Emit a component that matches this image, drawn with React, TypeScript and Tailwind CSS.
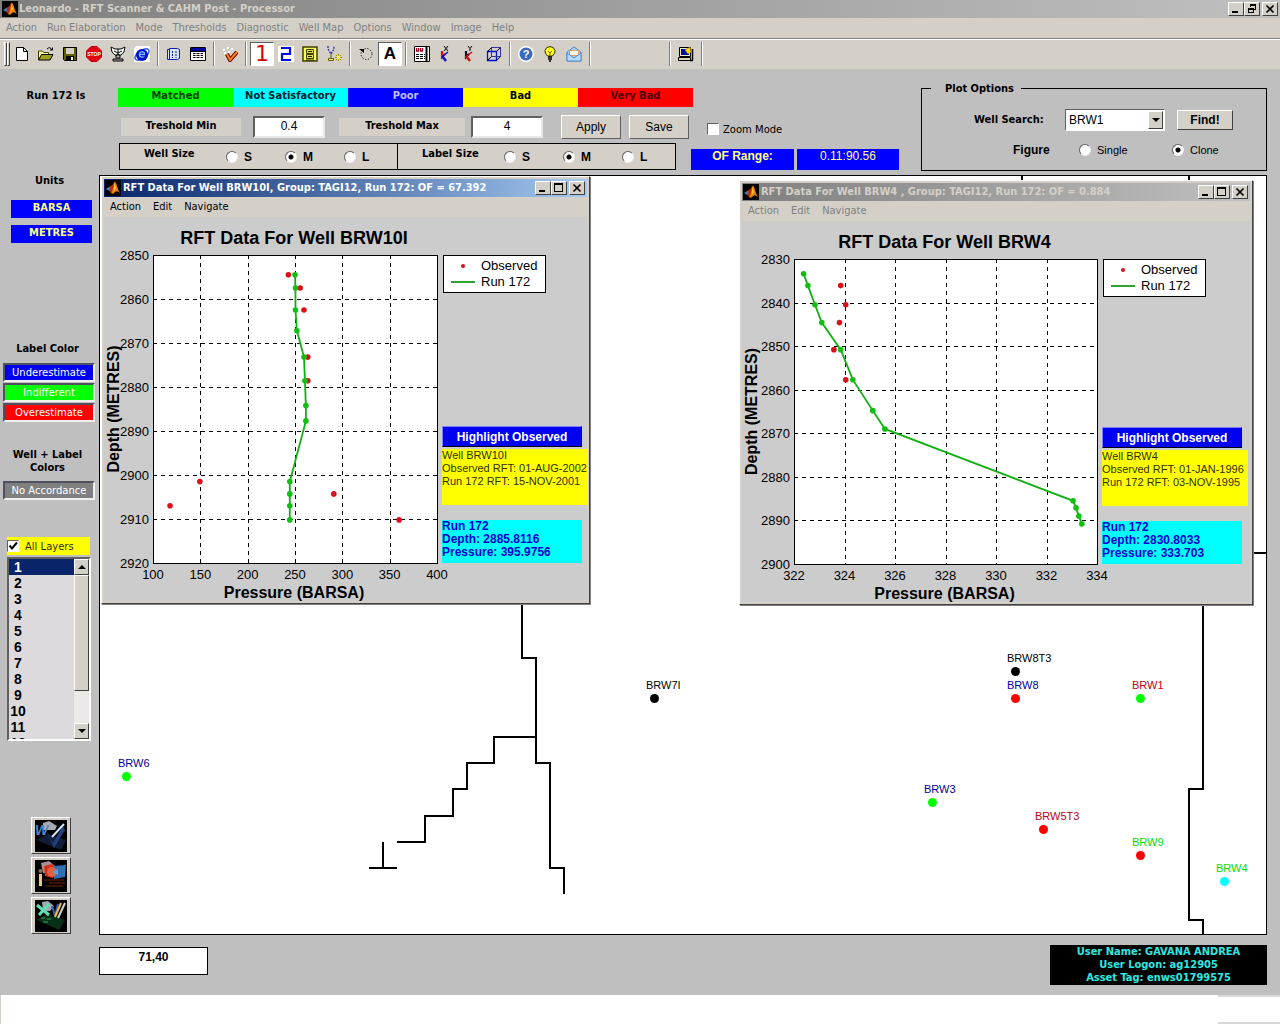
import { ReactNode, useState } from "react";

const tahoma = "font-['DejaVu_Sans_Condensed','Noto_Sans',sans-serif]";
const arial = "font-['Liberation_Sans',Arial,sans-serif]";
const verdana = "font-['DejaVu_Sans',sans-serif]";

const raised = "border border-t-white border-l-white border-r-[#404040] border-b-[#404040]";
const sunken = "border border-t-[#606060] border-l-[#606060] border-r-white border-b-white";

type Point = [number, number];

type ChartData = {
  well: string;
  xTicks: number[];
  yTicks: number[];
  left: number;
  plotWidth: number;
  plotHeight: number;
  observed: Point[];
  run: Point[];
};

const chartBRW10I: ChartData = {
  well: "BRW10I",
  xTicks: [100, 150, 200, 250, 300, 350, 400],
  yTicks: [2850, 2860, 2870, 2880, 2890, 2900, 2910, 2920],
  left: 49,
  plotWidth: 284,
  plotHeight: 308,
  observed: [
    [243, 2854.5],
    [255.5, 2857.5],
    [259.5, 2862.5],
    [263.5, 2873.2],
    [263.5, 2878.6],
    [149.5, 2901.5],
    [118, 2907],
    [291, 2904.3],
    [360, 2910.2],
  ],
  run: [
    [250, 2854.5],
    [250.5, 2857.5],
    [250.5, 2862.5],
    [252, 2867.2],
    [259.5, 2873.2],
    [260.5, 2878.6],
    [261.5, 2884.2],
    [261.5, 2887.7],
    [244.5, 2901.5],
    [244.5, 2904.3],
    [244.5, 2907],
    [244.5, 2910.2],
  ],
};

const chartBRW4: ChartData = {
  well: "BRW4",
  xTicks: [322, 324, 326, 328, 330, 332, 334],
  yTicks: [2830, 2840, 2850, 2860, 2870, 2880, 2890, 2900],
  left: 52,
  plotWidth: 303,
  plotHeight: 305,
  observed: [
    [323.85, 2836.1],
    [324.05, 2840.5],
    [323.8, 2844.6],
    [323.58, 2850.8],
    [324.05, 2857.7],
  ],
  run: [
    [322.38, 2833.4],
    [322.55, 2836.1],
    [322.83, 2840.5],
    [323.1, 2844.6],
    [323.85, 2850.8],
    [324.33, 2857.7],
    [325.12, 2864.8],
    [325.6, 2869],
    [333.05, 2885.5],
    [333.17, 2887.1],
    [333.28, 2889],
    [333.4, 2890.8],
  ],
};

const wells = [
  { name: "BRW7I", x: 554, y: 522, dot: "bg-black", label: "text-black" },
  { name: "BRW8T3", x: 915, y: 495, dot: "bg-black", label: "text-black" },
  { name: "BRW8", x: 915, y: 522, dot: "bg-[#ff0000]", label: "text-[#0000a0]" },
  { name: "BRW1", x: 1040, y: 522, dot: "bg-[#00ff00]", label: "text-[#c00010]" },
  { name: "BRW6", x: 26, y: 600, dot: "bg-[#00ff00]", label: "text-[#0000a0]" },
  { name: "BRW3", x: 832, y: 626, dot: "bg-[#00ff00]", label: "text-[#0000a0]" },
  { name: "BRW5T3", x: 943, y: 653, dot: "bg-[#ff0000]", label: "text-[#c00010]" },
  { name: "BRW9", x: 1040, y: 679, dot: "bg-[#ff0000]", label: "text-[#00e000]" },
  { name: "BRW4", x: 1124, y: 705, dot: "bg-[#00ffff]", label: "text-[#00e000]" },
];

const ratings = [
  { label: "Matched", style: "bg-[#00ff00] text-[#004000]" },
  { label: "Not Satisfactory", style: "bg-[#00ffff] text-[#002030]" },
  { label: "Poor", style: "bg-[#0000ff] text-[#c0c0ff]" },
  { label: "Bad", style: "bg-[#ffff00] text-black" },
  { label: "Very Bad", style: "bg-[#ff0000] text-[#500000]" },
];

const labelColors = [
  { label: "Underestimate", style: "bg-[#0000f0]" },
  { label: "Indifferent", style: "bg-[#00ff00]" },
  { label: "Overestimate", style: "bg-[#ff0000]" },
];

const mainMenu = [
  "Action",
  "Run Elaboration",
  "Mode",
  "Thresholds",
  "Diagnostic",
  "Well Map",
  "Options",
  "Window",
  "Image",
  "Help",
];

function MatlabLogo() {
  return (
    <svg viewBox="0 0 16 16" className="h-4 w-4 shrink-0" aria-hidden="true">
      <rect width="16" height="16" fill="#000" />
      <path d="M1 9 L5 6.5 L7 8 L4.5 11 Z" fill="#3f7fd0" />
      <path d="M5 6.5 Q8 5 9.5 1.5 L8.5 8 L6 13 L4.5 11 Z" fill="#b03010" />
      <path d="M9.5 1.5 Q11 2 12 6 Q13 10 15 13 Q12 10 10 12 Q8 15 6 13 Q8 10 9.5 1.5Z" fill="#f08010" />
      <path d="M9.5 2.5 L10.8 8 L9 11 Z" fill="#ffd040" />
    </svg>
  );
}

function CaptionButtons({ restore = false }: { restore?: boolean }) {
  const base = `flex h-[14px] w-4 items-center justify-center bg-[#d4d0c8] ${raised}`;
  return (
    <div className="flex shrink-0 items-center">
      <button aria-label="Minimize" className={base}>
        <svg viewBox="0 0 12 10" className="h-[10px] w-3" shapeRendering="crispEdges">
          <path d="M2 7h6v2H2z" />
        </svg>
      </button>
      <button aria-label={restore ? "Restore" : "Maximize"} className={base}>
        <svg viewBox="0 0 12 10" className="h-[10px] w-3" shapeRendering="crispEdges">
          {restore ? (
            <path d="M4 0h6v6H8V5h1V2H5v1H4zM2 4h6v5H2zM3 6v2h4V6z" fillRule="evenodd" />
          ) : (
            <path d="M1 0h9v9H1zM2 2v6h7V2z" fillRule="evenodd" />
          )}
        </svg>
      </button>
      <button aria-label="Close" className={`${base} ml-[2px]`}>
        <svg viewBox="0 0 12 10" className="h-[10px] w-3">
          <path d="M2.5 1.5l7 7M9.5 1.5l-7 7" stroke="#000" strokeWidth="1.7" />
        </svg>
      </button>
    </div>
  );
}

function Icon({ children }: { children: ReactNode }) {
  return (
    <svg viewBox="0 0 16 16" className="h-4 w-4" fill="none" aria-hidden="true">
      {children}
    </svg>
  );
}

function Tool({ name, active = false, children }: { name: string; active?: boolean; children: ReactNode }) {
  return (
    <button
      aria-label={name}
      className={`flex h-6 w-6 items-center justify-center ${active ? `bg-white ${sunken}` : ""}`}
    >
      {children}
    </button>
  );
}

function Separator() {
  return (
    <div className="flex w-2 justify-center">
      <div className="h-6 w-[2px] border-l border-r border-l-[#808080] border-r-white" />
    </div>
  );
}

function AxesIcon({ letter, first, second }: { letter: string; first: string; second: string }) {
  return (
    <Icon>
      {letter === "X" ? (
        <path d="M6 0l4 5M10 0l-4 5" stroke="#000" />
      ) : (
        <path d="M6 0l2 2.5L10 0M8 2.5V5" stroke="#000" />
      )}
      <path d="M4 5v6l3-3" stroke={first} strokeWidth="2.2" />
      <path d="M4 10l4 5" stroke={second} strokeWidth="2.6" />
      <path d="M5 10l5-4" stroke={second} strokeWidth="1.6" />
    </Icon>
  );
}

function Toolbar() {
  return (
    <div className="flex h-[31px] items-center border-t border-[#808080] bg-[#d4d0c8] pl-1 shadow-[inset_0_1px_0_#fff]">
      <div className={`h-6 w-[3px] ${raised}`} />
      <div className={`h-6 w-[3px] ${raised}`} />
      <Tool name="New">
        <Icon>
          <path d="M2.5 1.5h7l4 4v9h-11z" fill="#fff" stroke="#000" />
          <path d="M9.5 1.5v4h4" stroke="#000" />
        </Icon>
      </Tool>
      <Tool name="Open">
        <Icon>
          <path d="M.5 14V5h4l1 1.500h5V9" fill="#ffffa0" stroke="#404000" />
          <path d="M.5 14l3-5.500H15L12 14z" fill="#a0a020" stroke="#000" />
          <path d="M9 3q3-3 5 1M14.500 1.500V4H12" stroke="#000" />
        </Icon>
      </Tool>
      <Tool name="Save">
        <Icon>
          <path d="M1.500 1.500h13v13h-12l-1-1z" fill="#606000" stroke="#000" />
          <path d="M4 2h8v6H4z" fill="#d4d0c8" />
          <path d="M4 10h8v4.500H4z" fill="#000" />
          <path d="M9 11h2v3H9z" fill="#fff" />
        </Icon>
      </Tool>
      <Tool name="Stop">
        <svg viewBox="0 0 16 16" className="h-4 w-4">
          <path d="M5 .5h6L15.500 5v6L11 15.500H5L.5 11V5z" fill="#e00010" stroke="#c00010" />
          <text x="8" y="10" textAnchor="middle" fontSize="5" fontWeight="700" fill="#fff" fontFamily="Liberation Sans">
            STOP
          </text>
        </svg>
      </Tool>
      <Tool name="Connect">
        <Icon>
          <path d="M1 1l4 2h6l4-2-1 5-3 3H5L2 6z" fill="#fff" stroke="#000" />
          <path d="M4 5l4 2 4-2M8 3v6" stroke="#000" />
          <path d="M6 9h4v3H6zM3 13h10v2H3z" fill="#b0b0b0" stroke="#000" />
        </Icon>
      </Tool>
      <Tool name="Browser">
        <Icon>
          <path d="M2 0h14v16H0V3z" fill="#fff" />
          <ellipse cx="8" cy="8.500" rx="8" ry="4" stroke="#3060e0" strokeWidth="1.500" transform="rotate(-35 8 8.500)" />
          <circle cx="8" cy="9" r="6" fill="#0010d0" />
          <circle cx="8" cy="8.500" r="2.600" stroke="#80c0ff" strokeWidth="1.200" />
          <path d="M5 8.500h6" stroke="#80c0ff" strokeWidth="1.200" />
          <path d="M9 9.200h4v1.300H9z" fill="#0010d0" />
        </Icon>
      </Tool>
      <Separator />
      <Tool name="Columns">
        <Icon>
          <path d="M1.500 3.500h2v10h-2zM3.500 2.500h8l2 1v9l-2 1h-8z" fill="#d8e4ff" stroke="#1020b0" />
          <path d="M6.500 5v7M10 5v7" stroke="#1020b0" strokeDasharray="2 1" />
        </Icon>
      </Tool>
      <Tool name="Table">
        <Icon>
          <path d="M.5 1.500h15v13H.5z" fill="#fff" stroke="#000" />
          <path d="M1 2h14v3H1z" fill="#0000a0" />
          <path d="M1 5.500h14M3 7.500h10M3 9.500h10M3 11.500h10" stroke="#000" />
          <path d="M6 6v8M10 6v8" stroke="#fff" />
        </Icon>
      </Tool>
      <Separator />
      <Tool name="Check">
        <Icon>
          <path d="M1 4h2M5 2h2M9 3h2M2 7h2M6 6h2" stroke="#fff" strokeWidth="2" />
          <path d="M5 8l3 6 7-8" stroke="#600" strokeWidth="4" />
          <path d="M5 8l3 6 7-8" stroke="#ff8010" strokeWidth="2" />
        </Icon>
      </Tool>
      <Separator />
      <Tool name="Layout one" active>
        <span className="font-['DejaVu_Sans',sans-serif] text-[22px] leading-5 text-[#e00000]">1</span>
      </Tool>
      <Tool name="Layout two">
        <Icon>
          <path d="M0 0h16v16H0z" fill="#fff" />
          <path d="M3 2h9v6H4v6h9" stroke="#0010e0" strokeWidth="2.200" />
        </Icon>
      </Tool>
      <Tool name="Archive">
        <Icon>
          <path d="M1 1h14v14H1z" fill="#ffff60" stroke="#404000" strokeWidth="1.500" />
          <path d="M4.500 3.500h7v4h-7zM4.500 8.500h7v4h-7z" fill="#e0e040" stroke="#404000" />
          <path d="M6 5.500h4M6 10.500h4M4 14h8" stroke="#202000" />
        </Icon>
      </Tool>
      <Tool name="Curve">
        <Icon>
          <path d="M2 0v3l3 5 3-5V0" stroke="#3030a0" strokeWidth="1.300" strokeDasharray="2 1" />
          <path d="M5 8v4M2.500 12.500h5v2h-5z" stroke="#606000" fill="#ffff40" />
          <path d="M9 11.500h7M12.500 8v7M10 9l5 5M15 9l-5 5" stroke="#909000" />
          <circle cx="12.500" cy="11.500" r="1.800" fill="#ffff60" />
        </Icon>
      </Tool>
      <Separator />
      <Tool name="Rotate">
        <Icon>
          <circle cx="8.500" cy="8" r="5.500" stroke="#000" strokeDasharray="1.200 1.700" />
          <path d="M1 3h5v4z" fill="#000" />
        </Icon>
      </Tool>
      <Tool name="Labels" active>
        <span className={`${arial} text-[17px] font-bold leading-5 text-black`}>A</span>
      </Tool>
      <Separator />
      <Tool name="Report">
        <Icon>
          <path d="M.5 .5h15v15H.5z" fill="#fff" stroke="#000" />
          <path d="M12.500 0v16" stroke="#000" strokeWidth="2" />
          <path d="M2.500 2v3h2V2M6.500 2v3h2V2" stroke="#a00020" strokeWidth="1.300" />
          <path d="M2 8.500h9M2 10.500h9M2 12.500h9" stroke="#000" strokeDasharray="3 1" />
        </Icon>
      </Tool>
      <Tool name="X axis">
        <AxesIcon letter="X" first="#e01010" second="#1010c0" />
      </Tool>
      <Tool name="Y axis">
        <AxesIcon letter="Y" first="#101030" second="#d01010" />
      </Tool>
      <Tool name="Box">
        <Icon>
          <path d="M1.500 5.500h9v9h-9z" stroke="#0010d0" strokeWidth="1.300" />
          <path d="M5.500 1.500h9v9h-9z" stroke="#3030a0" />
          <path d="M1.500 5.500l4-4M10.500 5.500l4-4M10.500 14.500l4-4M1.500 14.500l4-4" stroke="#000" />
        </Icon>
      </Tool>
      <Separator />
      <Tool name="Help">
        <svg viewBox="0 0 16 16" className="h-4 w-4">
          <circle cx="8" cy="8" r="8" fill="#fff" />
          <circle cx="8" cy="8" r="6.500" fill="#3868c0" />
          <text x="8" y="12" textAnchor="middle" fontSize="11" fontWeight="700" fill="#fff" fontFamily="Liberation Sans">
            ?
          </text>
        </svg>
      </Tool>
      <Tool name="Tips">
        <Icon>
          <path d="M5.500 10Q2.500 7 3 4.500 4 .6 8 .6t5 3.900Q13.500 7 10.500 10z" fill="#ffff20" stroke="#303000" />
          <path d="M6 5l2 2 2-2M8 7v3" stroke="#806000" />
          <path d="M6 11h4M6 13h4M7 15h2" stroke="#000" strokeWidth="1.500" />
        </Icon>
      </Tool>
      <Tool name="Mail">
        <Icon>
          <path d="M1 6l7-5 7 5v9H1z" fill="#a8d0f8" stroke="#5088c8" />
          <path d="M3.500 4.500h9v5h-9z" fill="#fff8e8" stroke="#e0a060" />
          <path d="M1 7l7 5 7-5v8H1z" fill="#b8dcff" stroke="#5088c8" />
        </Icon>
      </Tool>
      <Separator />
      <div className="w-[72px]" />
      <Separator />
      <Tool name="Workstation">
        <Icon>
          <path d="M1.500 1.500h11v9h-11z" fill="#f0ecc0" stroke="#000" />
          <path d="M3 3h8v6H3z" fill="#0010a0" />
          <path d="M7 4l5-3 1 5-3 2z" fill="#ffe000" stroke="#806000" strokeWidth=".5" />
          <path d="M.5 11.500h12v3H.5z" fill="#d8d4b0" stroke="#000" />
          <path d="M14.500 3v11M12 14.500h3" stroke="#000" strokeWidth="1.500" />
        </Icon>
      </Tool>
      <Separator />
    </div>
  );
}

const radioStyle =
  "h-3 w-3 shrink-0 appearance-none rounded-full border border-t-[#606060] border-l-[#606060] border-r-[#eeeeee] border-b-[#eeeeee] bg-white checked:bg-[radial-gradient(circle,#000_0_2px,#fff_3px)]";

function SizeGroup({ title, name }: { title: string; name: string }) {
  const [size, setSize] = useState("M");
  return (
    <div role="radiogroup" aria-label={title} className="flex flex-1 items-center pl-6">
      <span className="w-[82px] pb-1 text-[11px] font-bold">{title}</span>
      {["S", "M", "L"].map((s) => (
        <label
          key={s}
          className={`${arial} flex w-[59px] items-center gap-[6px] text-[12px] font-bold last:w-auto`}
        >
          <input
            type="radio"
            name={name}
            checked={size === s}
            onChange={() => setSize(s)}
            className={radioStyle}
          />
          {s}
        </label>
      ))}
    </div>
  );
}

function Controls() {
  const inputStyle = `${arial} h-[22px] bg-white pb-[2px] text-center text-[12px] border-2 border-t-[#606060] border-l-[#606060] border-r-[#e8e8e8] border-b-[#e8e8e8]`;
  const buttonStyle = `${arial} h-6 w-[60px] bg-[#d4d0c8] text-[12px] border border-t-white border-l-white border-r-[#606060] border-b-[#606060]`;
  return (
    <div className="flex h-[106px] justify-between pt-[19px]">
      <div className="pl-[19px]">
        <div className="flex">
          {ratings.map((r) => (
            <div key={r.label} className={`h-[19px] w-[115px] text-center text-[11px] font-bold leading-4 ${r.style}`}>
              {r.label}
            </div>
          ))}
        </div>
        <div className="mt-2 flex items-center pl-[3px]">
          <label htmlFor="min" className="h-[18px] w-[120px] bg-[#d4d0c8] text-center text-[11px] font-bold leading-4">
            Treshold Min
          </label>
          <input id="min" defaultValue="0.4" className={`${inputStyle} ml-3 w-[72px]`} />
          <label htmlFor="max" className="ml-[14px] h-[18px] w-[126px] bg-[#d4d0c8] text-center text-[11px] font-bold leading-4">
            Treshold Max
          </label>
          <input id="max" defaultValue="4" className={`${inputStyle} ml-[6px] w-[72px]`} />
          <button className={`${buttonStyle} ml-[18px]`}>Apply</button>
          <button className={`${buttonStyle} ml-2`}>Save</button>
          <label className={`${verdana} ml-[18px] flex items-center gap-1 pt-1 text-[10px]`}>
            <input type="checkbox" className={`h-3 w-3 appearance-none bg-white ${sunken}`} />
            Zoom Mode
          </label>
        </div>
        <div className="mt-1 flex items-end">
          <div className="ml-[1px] flex h-[27px] w-[557px] divide-x divide-black border border-black bg-[#d4d0c8]">
            <SizeGroup title="Well Size" name="well-size" />
            <SizeGroup title="Label Size" name="label-size" />
          </div>
          <div className={`${arial} ml-[15px] flex gap-[3px] text-center text-[12px] leading-[14px] text-[#ffff80]`}>
            <div className="h-[21px] w-[103px] bg-[#0000ff] font-bold">OF Range:</div>
            <div className="h-[21px] w-[102px] bg-[#0000ff]">0.11:90.56</div>
          </div>
        </div>
      </div>

      <section className="flex h-[83px] w-[346px] shrink-0 flex-col border border-black">
        <h2 className="-mt-2 ml-[9px] w-[90px] bg-[#bfbfbf] pl-[14px] text-[11px] font-bold leading-4">Plot Options</h2>
        <div className="mt-3 flex items-center">
          <label htmlFor="search" className="ml-[52px] w-[91px] text-[11px] font-bold">
            Well Search:
          </label>
          <div className={`relative h-[22px] w-[100px] bg-white ${sunken}`}>
            <select id="search" className={`${arial} block h-5 w-full appearance-none pl-[3px] text-[12px] leading-5`}>
              <option>BRW1</option>
              <option>BRW4</option>
              <option>BRW10I</option>
            </select>
            <span className={`pointer-events-none absolute inset-y-[1px] right-[1px] flex w-[15px] items-center justify-center bg-[#d4d0c8] ${raised}`}>
              <svg viewBox="0 0 8 4" className="h-1 w-2">
                <path d="M0 0h8L4 4z" />
              </svg>
            </span>
          </div>
          <button className={`${arial} ml-3 h-5 w-14 bg-[#d4d0c8] text-[12px] font-bold ${raised}`}>Find!</button>
        </div>
        <div className={`${arial} mt-[10px] flex items-center text-[11px]`}>
          <span className="ml-[91px] w-[66px] text-[12px] font-bold">Figure</span>
          <label className="flex w-[93px] items-center gap-[6px]">
            <input type="radio" name="figure" className={radioStyle} />
            Single
          </label>
          <label className="flex items-center gap-[6px]">
            <input type="radio" name="figure" defaultChecked className={radioStyle} />
            Clone
          </label>
        </div>
      </section>
    </div>
  );
}

function Chart({ data }: { data: ChartData }) {
  const { xTicks, yTicks, left, plotWidth: w, plotHeight: h } = data;
  const top = 38;
  const sx = (v: number) => left + ((v - xTicks[0]) / (xTicks[xTicks.length - 1] - xTicks[0])) * w;
  const sy = (v: number) => top + ((v - yTicks[0]) / (yTicks[yTicks.length - 1] - yTicks[0])) * h;
  const midY = top + h / 2;

  return (
    <svg
      width={left + w}
      height={top + h + 38}
      className={`${arial} shrink-0 overflow-visible`}
      role="img"
      aria-label={`RFT data for well ${data.well}`}
    >
      <text x={left + w / 2 - 1} y={27} textAnchor="middle" fontSize="18" fontWeight="700">
        RFT Data For Well {data.well}
      </text>
      <rect x={left} y={top} width={w} height={h} fill="#fff" />
      <g stroke="#000" strokeDasharray="4 4" shapeRendering="crispEdges">
        {xTicks.slice(1, -1).map((t) => (
          <path key={t} d={`M${Math.round(sx(t))} ${top}v${h}`} />
        ))}
        {yTicks.slice(1, -1).map((t) => (
          <path key={t} d={`M${left} ${Math.round(sy(t))}h${w}`} />
        ))}
      </g>
      <rect x={left} y={top} width={w} height={h} fill="none" stroke="#000" shapeRendering="crispEdges" />
      <g fontSize="13">
        {xTicks.map((t) => (
          <text key={t} x={sx(t)} y={top + h + 16} textAnchor="middle">
            {t}
          </text>
        ))}
        {yTicks.map((t) => (
          <text key={t} x={left - 4} y={sy(t) + 5} textAnchor="end">
            {t}
          </text>
        ))}
      </g>
      <g fill="#dc1018">
        {data.observed.map(([x, y], i) => (
          <circle key={i} cx={sx(x)} cy={sy(y)} r="2.8" />
        ))}
      </g>
      <polyline
        points={data.run.map(([x, y]) => `${sx(x)},${sy(y)}`).join(" ")}
        fill="none"
        stroke="#10b010"
        strokeWidth="1.8"
      />
      <g fill="#10c010">
        {data.run.map(([x, y], i) => (
          <circle key={i} cx={sx(x)} cy={sy(y)} r="2.8" />
        ))}
      </g>
      <text x={left + w / 2 - 1} y={top + h + 35} textAnchor="middle" fontSize="16" fontWeight="700">
        Pressure (BARSA)
      </text>
      <text transform={`translate(15 ${midY}) rotate(-90)`} textAnchor="middle" fontSize="16" fontWeight="700">
        Depth (METRES)
      </text>
    </svg>
  );
}

type WindowProps = {
  data: ChartData;
  title: string;
  active?: boolean;
  position: string;
  notes: string[];
  readout: string[];
};

function PlotWindow({ data, title, active = false, position, notes, readout }: WindowProps) {
  return (
    <section className={`${tahoma} absolute bg-[#d4d0c8] p-[2px] shadow-[1px_1px_0_#808080] ${raised} ${position}`}>
      <header
        className={`flex h-[18px] items-center bg-linear-to-r pl-[1px] pr-[2px] ${
          active ? "from-[#0a246a] to-[#a6caf0] text-white" : "from-[#808080] to-[#c0c0c0] text-[#d4d0c8]"
        }`}
      >
        <MatlabLogo />
        <h2 className="flex-1 whitespace-nowrap pl-[2px] text-[11px] font-bold">{title}</h2>
        <CaptionButtons />
      </header>
      <nav className={`flex h-5 items-center gap-3 pl-[6px] text-[11px] ${active ? "text-black" : "text-[#808080]"}`}>
        <button>Action</button>
        <button>Edit</button>
        <button>Navigate</button>
      </nav>
      <div className="flex bg-[#cccccc]">
        <Chart data={data} />
        <div className={`${arial} ml-[5px] mt-[38px] flex flex-1 flex-col`} style={{ height: data.plotHeight }}>
          <div className="ml-[1px] flex h-[38px] w-[103px] flex-col justify-center border border-black bg-white text-[13px] leading-4">
            <div className="flex items-center">
              <span className="flex w-[37px] justify-center">
                <span className="h-1 w-1 rounded-full bg-[#dc1018]" />
              </span>
              Observed
            </div>
            <div className="flex items-center">
              <span className="flex w-[37px] justify-center">
                <span className="h-[2px] w-6 bg-[#30a030]" />
              </span>
              Run 172
            </div>
          </div>
          <button className="mt-auto h-[21px] w-[140px] border border-t-[#8080ff] border-l-[#8080ff] border-r-black border-b-black bg-[#0000f0] text-[12px] font-bold leading-[18px] text-white">
            Highlight Observed
          </button>
          <div className="mt-[2px] h-14 w-[146px] whitespace-nowrap bg-[#ffff00] text-[11px] leading-[13px] text-[#303000]">
            {notes.map((n) => (
              <p key={n}>{n}</p>
            ))}
          </div>
          <div className="mt-[15px] h-[43px] w-[140px] bg-[#00ffff] text-[12px] font-bold leading-[13px] text-[#0000d0]">
            {readout.map((r) => (
              <p key={r}>{r}</p>
            ))}
          </div>
        </div>
      </div>
    </section>
  );
}

function WellMap() {
  return (
    <div className={`${arial} relative h-[760px] overflow-hidden border border-black bg-white`}>
      <svg className="absolute inset-0 h-full w-full" fill="none" stroke="#000" strokeWidth="2" aria-hidden="true">
        <path d="M422 400V482H436V587H450V692H464V718" />
        <path d="M436 561H394V587H367V613H353V640H325V666H297" />
        <path d="M283 666V692M269 692H297" />
        <path d="M922 0V20M1089 0V40M1103 400V613H1089V744H1103V760M1130 377H1170" />
      </svg>
      {wells.map((w) => (
        <div key={w.name} className="absolute" style={{ left: w.x - 8, top: w.y - 20 }}>
          <p className={`text-[11px] leading-[14px] ${w.label}`}>{w.name}</p>
          <div className={`ml-1 mt-[2px] h-[9px] w-[9px] rounded-full ${w.dot}`} />
        </div>
      ))}
      <PlotWindow
        data={chartBRW10I}
        title="RFT Data For Well BRW10I, Group: TAGI12, Run 172: OF = 67.392"
        active
        position="left-[1px] top-0 w-[489px]"
        notes={["Well BRW10I", "Observed RFT: 01-AUG-2002", "Run 172 RFT: 15-NOV-2001"]}
        readout={["Run 172", "Depth: 2885.8116", "Pressure: 395.9756"]}
      />
      <PlotWindow
        data={chartBRW4}
        title="RFT Data For Well BRW4 , Group: TAGI12, Run 172: OF = 0.884"
        position="left-[639px] top-1 w-[514px]"
        notes={["Well BRW4", "Observed RFT: 01-JAN-1996", "Run 172 RFT: 03-NOV-1995"]}
        readout={["Run 172", "Depth: 2830.8033", "Pressure: 333.703"]}
      />
    </div>
  );
}

function LayerList() {
  const [selected, setSelected] = useState(1);
  const arrow = `flex h-4 w-[15px] shrink-0 items-center justify-center bg-[#d4d0c8] ${raised}`;
  return (
    <div className="ml-[7px] mt-[2px] flex h-[184px] w-[84px] border-2 border-t-[#606060] border-l-[#606060] border-r-white border-b-white bg-[#dcdadc]">
      <ul role="listbox" aria-label="Layers" className={`${arial} flex-1 overflow-hidden text-[14px] font-bold leading-4`}>
        {Array.from({ length: 12 }, (_, i) => i + 1).map((n) => (
          <li
            key={n}
            role="option"
            aria-selected={selected === n}
            onClick={() => setSelected(n)}
            className={selected === n ? "bg-[#0a246a] text-white" : ""}
          >
            <span className="block w-[18px] text-center">{n}</span>
          </li>
        ))}
      </ul>
      <div className="flex w-[15px] flex-col bg-[#eceae6]">
        <button aria-label="Scroll up" className={arrow}>
          <svg viewBox="0 0 8 4" className="h-1 w-2">
            <path d="M0 4h8L4 0z" />
          </svg>
        </button>
        <div className={`h-[116px] bg-[#d4d0c8] ${raised}`} />
        <button aria-label="Scroll down" className={`${arrow} mt-auto`}>
          <svg viewBox="0 0 8 4" className="h-1 w-2">
            <path d="M0 0h8L4 4z" />
          </svg>
        </button>
      </div>
    </div>
  );
}

function ExportButton({ name, children }: { name: string; children: ReactNode }) {
  return (
    <button aria-label={name} className={`flex h-[37px] w-10 items-center justify-center bg-[#d4d0c8] ${raised}`}>
      <svg viewBox="0 0 32 32" className="h-8 w-8" aria-hidden="true">
        <rect width="32" height="32" fill="#000" />
        {children}
      </svg>
    </button>
  );
}

function Sidebar() {
  const heading = "text-center text-[11px] font-bold";
  const unit = "ml-[11px] block h-[18px] w-[81px] bg-[#0000ff] pb-[3px] text-[11px] font-bold leading-[15px] text-[#ffff80]";
  const swatch = `${verdana} ml-[3px] block h-[19px] w-[92px] text-[10px] leading-4 text-white border-2 border-t-[#505060] border-l-[#505060] border-r-[#f0f0f0] border-b-[#f0f0f0]`;
  return (
    <aside className="w-[99px] shrink-0 pt-[19px]">
      <p className={`${heading} pl-[13px] leading-4`}>Run 172 Is</p>
      <h2 className={`${heading} mt-[69px] leading-4`}>Units</h2>
      <button className={`${unit} mt-[11px]`}>BARSA</button>
      <button className={`${unit} mt-[7px]`}>METRES</button>
      <h2 className={`${heading} mt-[98px] pr-1 leading-4`}>Label Color</h2>
      <div className="mt-[6px] flex flex-col gap-[1px]">
        {labelColors.map((c) => (
          <button key={c.label} className={`${swatch} ${c.style}`}>
            {c.label}
          </button>
        ))}
      </div>
      <h2 className={`${heading} mt-[26px] pr-1 leading-[13px]`}>
        Well + Label
        <br />
        Colors
      </h2>
      <button className={`${swatch} mt-[7px] bg-[#808080]`}>No Accordance</button>
      <label className={`${verdana} ml-[7px] mt-[37px] flex h-[18px] w-[83px] items-center gap-[6px] bg-[#ffff00] text-[10px] text-[#303000]`}>
        <span className="grid">
          <input
            type="checkbox"
            defaultChecked
            className={`peer col-start-1 row-start-1 h-3 w-3 appearance-none bg-white ${sunken}`}
          />
          <svg viewBox="0 0 12 12" className="pointer-events-none invisible col-start-1 row-start-1 h-3 w-3 peer-checked:visible">
            <path d="M2.5 5.500l2.500 3 5-6" fill="none" stroke="#000" strokeWidth="2" />
          </svg>
        </span>
        All Layers
      </label>
      <LayerList />
      <div className="ml-[31px] mt-[76px] flex flex-col gap-[3px]">
        <ExportButton name="Export to Word">
          <path d="M8 3l6-2 8 5-2 4H8z" fill="#a8a8b0" />
          <path d="M1 20l12-6 18 6-5 10z" fill="#101c38" />
          <path d="M11 10l7 13 10-17 2 4-11 18z" fill="#204080" />
          <text x="0" y="15" fontSize="14" fontWeight="700" fontStyle="italic" fill="#5088c8" fontFamily="Liberation Sans">
            W
          </text>
          <path d="M29 4L17 17" stroke="#d0e4ff" strokeWidth="2" />
        </ExportButton>
        <ExportButton name="Export to PowerPoint">
          <path d="M6 3l8-2 6 5-2 7H8z" fill="#a89098" />
          <path d="M9 6l8-2 5 6-4 8-8-2z" fill="#d83018" />
          <path d="M18 6l13-1-1 12-11 2z" fill="#3070b0" />
          <circle cx="17" cy="12" r="5" fill="#e06040" />
          <path d="M17 12l6-3v6z" fill="#60a0d8" />
          <path d="M4 14h3v12H4z" fill="#e8c890" />
          <circle cx="5.500" cy="11" r="2" fill="#907050" />
          <path d="M9 20h20M14 23h16M10 26h18" stroke="#702810" strokeWidth="1" />
        </ExportButton>
        <ExportButton name="Export to Excel">
          <path d="M7 2l6-1 6 5-4 5H8z" fill="#a0a8b0" />
          <path d="M2 20l10-6 18 6-6 10z" fill="#083018" />
          <path d="M2 5l12 10M14 4L4 15" stroke="#60e0b0" strokeWidth="3" />
          <path d="M17 6l3 10M23 4l-3 12" stroke="#4058b0" strokeWidth="2" />
          <path d="M26 3l-6 14" stroke="#e8c040" strokeWidth="2" />
          <path d="M30 3l-7 15" stroke="#d0d0d0" strokeWidth="2" />
          <path d="M6 18h4M12 19h4M8 22h5" stroke="#208040" strokeWidth="1.500" />
        </ExportButton>
      </div>
    </aside>
  );
}

export default function App() {
  return (
    <div className={`${tahoma} flex min-h-screen flex-col bg-white text-black`}>
      <header className="flex h-[18px] items-center bg-linear-to-r from-[#808080] to-[#c0c0c0] px-[2px]">
        <MatlabLogo />
        <h1 className="flex-1 pl-[1px] text-[11px] font-bold leading-4 text-[#d4d0c8]">
          Leonardo - RFT Scanner &amp; CAHM Post - Processor
        </h1>
        <CaptionButtons restore />
      </header>
      <nav className="flex h-5 items-center gap-[10px] bg-[#d4d0c8] pl-[6px] text-[11px] text-[#808080]">
        {mainMenu.map((item) => (
          <button key={item}>{item}</button>
        ))}
      </nav>
      <Toolbar />

      <div className="flex bg-[#bfbfbf]">
        <Sidebar />
        <main className="min-w-0 flex-1 pb-[10px] pr-[13px]">
          <Controls />
          <WellMap />
          <footer className="flex items-start justify-between pt-[10px]">
            <output className={`${arial} mt-[2px] h-7 w-[109px] border border-black bg-white pt-[1px] text-center text-[12px] font-bold leading-4`}>
              71,40
            </output>
            <div className="h-10 w-[217px] bg-black text-center text-[11px] font-bold leading-[13px] text-[#30e8e0]">
              <p>User Name: GAVANA ANDREA</p>
              <p>User Logon: ag12905</p>
              <p>Asset Tag: enws01799575</p>
            </div>
          </footer>
        </main>
      </div>
      <div className="flex flex-1 flex-col items-end border-l border-[#d4d0c8]">
        <div className="w-[62px] flex-1 border-y-2 border-[#d8d8d8]" />
      </div>
    </div>
  );
}
